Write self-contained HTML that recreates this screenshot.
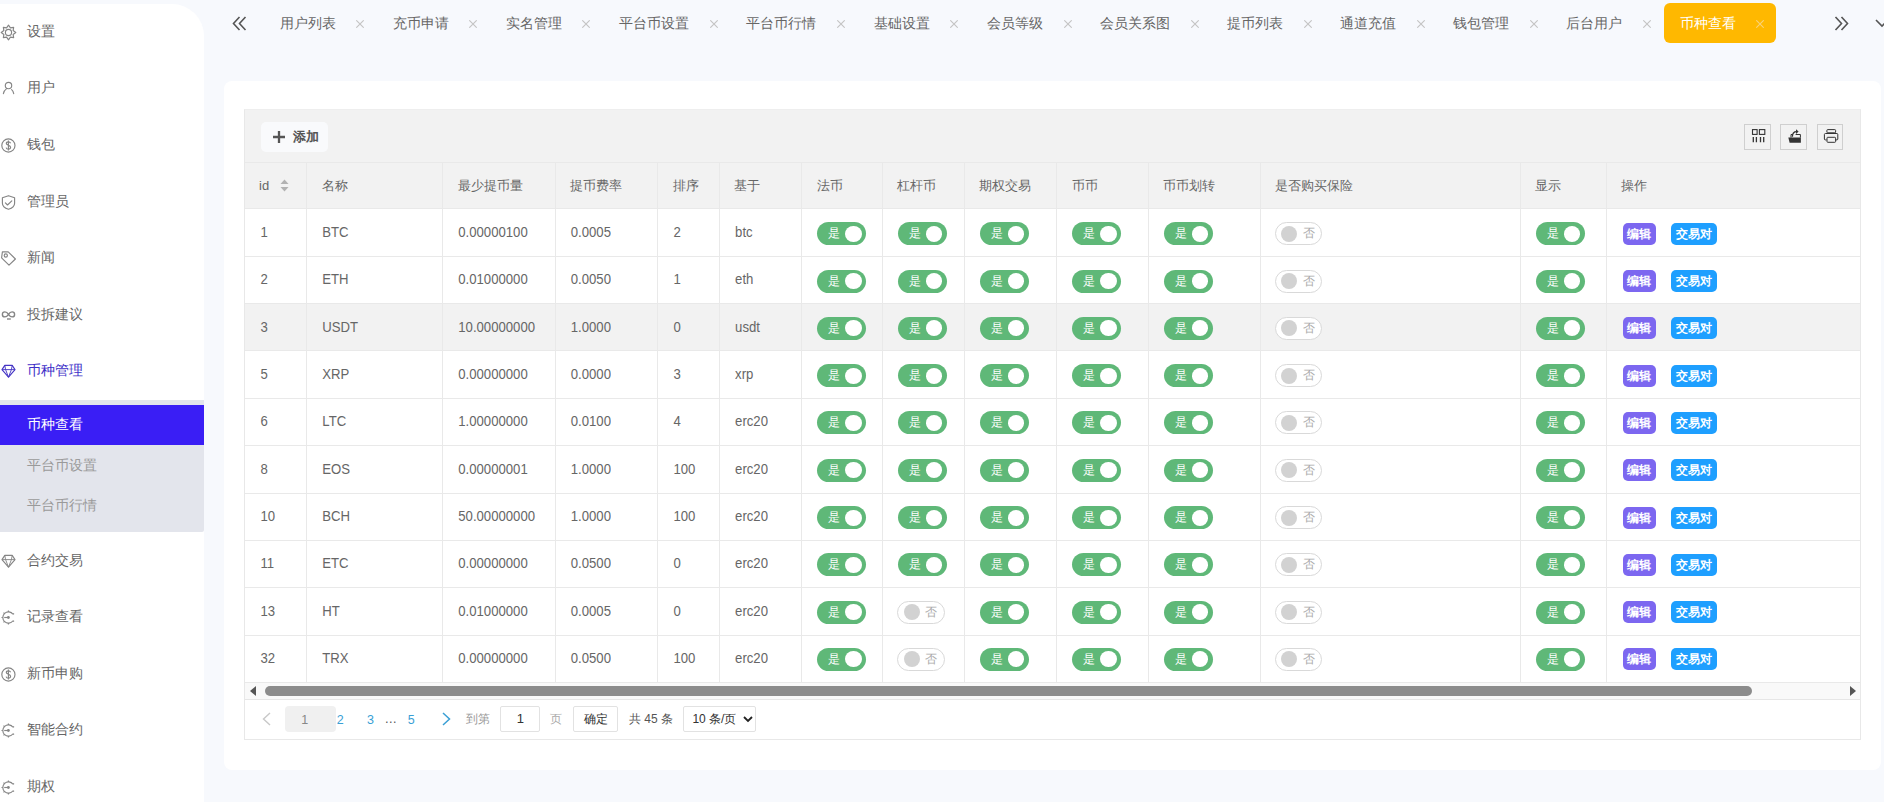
<!DOCTYPE html><html><head><meta charset="utf-8"><style>
*{box-sizing:border-box;margin:0;padding:0}
html,body{width:1884px;height:802px;overflow:hidden;background:#f7f9fd;font-family:"Liberation Sans",sans-serif;color:#666}
.abs{position:absolute}
.side{position:absolute;left:0;top:4px;width:204px;height:798px;background:#fff;border-top-right-radius:32px}
.mi{position:absolute;left:0;height:20px;line-height:20px;font-size:14.3px;color:#666;white-space:nowrap}
.mi svg{position:absolute;left:1px;top:3px}
.mi span{position:absolute;left:26.6px;top:0}
.sub{position:absolute;left:0;top:400px;width:204px;height:131.5px;background:#e3e5ec;border-bottom-right-radius:2px}
.subact{position:absolute;left:0;top:405px;width:204px;height:40px;background:#3a1ef5}
.st{position:absolute;left:27px;font-size:14px;line-height:20px;color:#9a9a9a;white-space:nowrap}
.tab{position:absolute;height:20px;line-height:20px;font-size:14.2px;color:#666;white-space:nowrap}
.tab .x{position:absolute;top:0;font-size:13px;color:#bbb}
.tab.on{background:#ffb800;border-radius:6px;color:#fff}
.tab.on .x{color:#ffd77a}
.card{position:absolute;left:224px;top:81px;width:1657px;height:689px;background:#fff;border-radius:8px}
.tbl{position:absolute;left:244px;top:109px;width:1617px;height:631px;border:1px solid #e8e8e8;border-top-color:#eeeeee;background:#fff}
.tool{position:absolute;left:0;top:0;width:1615px;height:53px;background:#f2f2f2;border-bottom:1px solid #e6e6e6}
.addb{position:absolute;left:16px;top:12px;width:67px;height:29.5px;background:#f9fafc;border-radius:5px;font-size:13px;color:#555;font-weight:bold}
.ib{position:absolute;top:14px;width:27px;height:26px;border:1px solid #cfcfcf;background:#f2f2f2}
.hdr{position:absolute;left:0;top:53px;width:1615px;height:46px;background:#f2f2f2}
.row{position:absolute;left:0;width:1615px;background:#fff}
.row.hov{background:#f2f2f2}
.hl{position:absolute;left:0;width:1615px;height:1px;background:#e9e9e9}
.vl{position:absolute;width:1px;background:#e9e9e9}
.c{position:absolute;font-size:13.15px;color:#666;white-space:nowrap;line-height:20px;transform:scaleY(1.09);transform-origin:0 55%}
.h{position:absolute;font-size:13px;color:#666;white-space:nowrap;line-height:20px}
.sw{position:absolute;height:23px;border-radius:12px}
.sw.on{width:49px;background:#5fb878}
.sw.on i{position:absolute;left:28px;top:3.5px;width:16.5px;height:16px;border-radius:50%;background:#fff}
.sw.on em{position:absolute;left:11px;top:0;font-style:normal;font-size:12px;line-height:23px;color:#fff}
.sw.off{width:47.5px;background:#fff;border:1px solid #d9d9d9}
.sw.off i{position:absolute;left:5.5px;top:2.5px;width:16px;height:16px;border-radius:50%;background:#d2d2d2}
.sw.off em{position:absolute;left:27px;top:0;font-style:normal;font-size:12px;line-height:21px;color:#aaa}
.btn{position:absolute;height:22px;line-height:22px;border-radius:5px;color:#fff;font-size:12px;font-weight:bold;text-align:center}
.pg{position:absolute;font-size:12.5px;line-height:20px;white-space:nowrap}
.pbox{position:absolute;top:596.4px;height:25.8px;border:1px solid #e2e2e2;border-radius:2px;background:#fff;font-size:13px;line-height:24px;text-align:center;color:#333}
</style></head><body>
<div class="side"></div>
<div class="sub"></div><div class="subact"></div>
<svg class="abs" style="left:0;top:23.8px" width="17" height="17" viewBox="0 0 17 17" fill="none" stroke="#858585" stroke-width="1.15"><path d="M8.50 1.20 L10.41 3.88 L13.66 3.34 L13.12 6.59 L15.80 8.50 L13.12 10.41 L13.66 13.66 L10.41 13.12 L8.50 15.80 L6.59 13.12 L3.34 13.66 L3.88 10.41 L1.20 8.50 L3.88 6.59 L3.34 3.34 L6.59 3.88Z" stroke-linejoin="round"/><circle cx="8.5" cy="8.5" r="3.1"/></svg>
<div class="mi" style="top:20.85px;color:#666"><span>设置</span></div>
<svg class="abs" style="left:0;top:80.4px" width="17" height="17" viewBox="0 0 17 17" fill="none" stroke="#858585" stroke-width="1.15"><circle cx="8.5" cy="5.5" r="3.2"/><path d="M3.4 13.6C3.9 11.2 5 9.7 6.6 8.6M11.6 9.6C12.8 10.6 13.4 11.9 13.7 13.6" stroke-linecap="round"/></svg>
<div class="mi" style="top:77.45px;color:#666"><span>用户</span></div>
<svg class="abs" style="left:0;top:137.0px" width="17" height="17" viewBox="0 0 17 17" fill="none" stroke="#858585" stroke-width="1.15"><circle cx="8.4" cy="8.5" r="6.6"/><path d="M10.6 6.2C10.2 5.2 9.4 4.8 8.4 4.8 7.2 4.8 6.3 5.5 6.3 6.5 6.3 8.6 10.6 7.9 10.6 10.3 10.6 11.4 9.7 12.2 8.4 12.2 7.2 12.2 6.4 11.6 6.1 10.6M8.4 3.6V13.4"/></svg>
<div class="mi" style="top:134.05px;color:#666"><span>钱包</span></div>
<svg class="abs" style="left:0;top:193.6px" width="17" height="17" viewBox="0 0 17 17" fill="none" stroke="#858585" stroke-width="1.15"><path d="M8.5 1.7L14.6 3.8V9.2C14.6 12.3 12.2 14.2 8.5 15.3 4.8 14.2 2.4 12.3 2.4 9.2V3.8Z" stroke-linejoin="round"/><path d="M5.4 8.8L7.5 11 11.8 6.8" stroke-linecap="round" stroke-linejoin="round"/></svg>
<div class="mi" style="top:190.65px;color:#666"><span>管理员</span></div>
<svg class="abs" style="left:0;top:250.1px" width="17" height="17" viewBox="0 0 17 17" fill="none" stroke="#858585" stroke-width="1.15"><path d="M2.4 1.8H8.2L15.4 9 9 15.2 1.6 7.8Z" stroke-linejoin="round"/><circle cx="5.8" cy="5.5" r="1.6"/></svg>
<div class="mi" style="top:247.25px;color:#666"><span>新闻</span></div>
<svg class="abs" style="left:0;top:307.4px" width="17" height="17" viewBox="0 0 17 17" fill="none" stroke="#858585" stroke-width="1.15"><path d="M8.5 7.4C7.3 5.5 6.3 4.9 4.9 4.9 3.4 4.9 2.4 6 2.4 7.4 2.4 8.8 3.4 9.9 4.9 9.9 6.3 9.9 7.3 9.3 8.5 7.4 9.7 5.5 10.7 4.9 12.1 4.9 13.6 4.9 14.6 6 14.6 7.4 14.6 8.8 13.6 9.9 12.1 9.9 10.7 9.9 9.7 9.3 8.5 7.4Z" stroke-width="1.4"/><path d="M7 12H10.8" stroke-width="1.4"/></svg>
<div class="mi" style="top:303.85px;color:#666"><span>投拆建议</span></div>
<svg class="abs" style="left:0;top:363.4px" width="17" height="17" viewBox="0 0 17 17" fill="none" stroke="#4434c4" stroke-width="1.15"><path d="M4.8 2.4H12.2L15 6.6 8.5 14.2 2 6.6Z" stroke-linejoin="round"/><path d="M2 6.6H15M5.6 6.6L8.5 14.2 11.4 6.6M4.8 2.4L5.6 6.6M12.2 2.4L11.4 6.6" stroke-width="0.9"/></svg>
<div class="mi" style="top:360.45px;color:#3d2fc8"><span>币种管理</span></div>
<svg class="abs" style="left:0;top:552.5px" width="17" height="17" viewBox="0 0 17 17" fill="none" stroke="#858585" stroke-width="1.15"><path d="M4.8 2.4H12.2L15 6.6 8.5 14.2 2 6.6Z" stroke-linejoin="round"/><path d="M2 6.6H15M5.6 6.6L8.5 14.2 11.4 6.6M4.8 2.4L5.6 6.6M12.2 2.4L11.4 6.6" stroke-width="0.9"/></svg>
<div class="mi" style="top:549.60px;color:#666"><span>合约交易</span></div>
<svg class="abs" style="left:0;top:609.0px" width="17" height="17" viewBox="0 0 17 17" fill="none" stroke="#858585" stroke-width="1.15"><path d="M12.99 5.29A5.60 5.60 0 1 0 12.99 11.71"/><path d="M8.40 2.90L8.40 1.60M4.44 4.54L3.55 3.65M2.80 8.50L1.50 8.50M4.44 12.46L3.55 13.35M8.40 14.10L8.40 15.40M12.99 5.29L14.05 4.54M12.99 11.71L14.05 12.46"/><path d="M4.2 8.5H8.4"/><circle cx="8.4" cy="8.5" r="1.4" fill="#858585" stroke="none"/></svg>
<div class="mi" style="top:606.15px;color:#666"><span>记录查看</span></div>
<svg class="abs" style="left:0;top:665.6px" width="17" height="17" viewBox="0 0 17 17" fill="none" stroke="#858585" stroke-width="1.15"><circle cx="8.4" cy="8.5" r="6.6"/><path d="M10.6 6.2C10.2 5.2 9.4 4.8 8.4 4.8 7.2 4.8 6.3 5.5 6.3 6.5 6.3 8.6 10.6 7.9 10.6 10.3 10.6 11.4 9.7 12.2 8.4 12.2 7.2 12.2 6.4 11.6 6.1 10.6M8.4 3.6V13.4"/></svg>
<div class="mi" style="top:662.70px;color:#666"><span>新币申购</span></div>
<svg class="abs" style="left:0;top:722.1px" width="17" height="17" viewBox="0 0 17 17" fill="none" stroke="#858585" stroke-width="1.15"><path d="M12.99 5.29A5.60 5.60 0 1 0 12.99 11.71"/><path d="M8.40 2.90L8.40 1.60M4.44 4.54L3.55 3.65M2.80 8.50L1.50 8.50M4.44 12.46L3.55 13.35M8.40 14.10L8.40 15.40M12.99 5.29L14.05 4.54M12.99 11.71L14.05 12.46"/><path d="M4.2 8.5H8.4"/><circle cx="8.4" cy="8.5" r="1.4" fill="#858585" stroke="none"/></svg>
<div class="mi" style="top:719.25px;color:#666"><span>智能合约</span></div>
<svg class="abs" style="left:0;top:778.7px" width="17" height="17" viewBox="0 0 17 17" fill="none" stroke="#858585" stroke-width="1.15"><path d="M12.99 5.29A5.60 5.60 0 1 0 12.99 11.71"/><path d="M8.40 2.90L8.40 1.60M4.44 4.54L3.55 3.65M2.80 8.50L1.50 8.50M4.44 12.46L3.55 13.35M8.40 14.10L8.40 15.40M12.99 5.29L14.05 4.54M12.99 11.71L14.05 12.46"/><path d="M4.2 8.5H8.4"/><circle cx="8.4" cy="8.5" r="1.4" fill="#858585" stroke="none"/></svg>
<div class="mi" style="top:775.80px;color:#666"><span>期权</span></div>
<div class="st" style="top:414px;color:#fff">币种查看</div>
<div class="st" style="top:455px">平台币设置</div>
<div class="st" style="top:495px">平台币行情</div>
<svg class="abs" style="left:232px;top:16px" width="15" height="15" viewBox="0 0 15 15" fill="none" stroke="#555" stroke-width="1.6"><path d="M7.5 1L1.5 7.5 7.5 14M13.5 1L7.5 7.5 13.5 14"/></svg>
<div class="abs" style="left:1664px;top:3px;width:112px;height:40.3px;background:#ffb800;border-radius:6px"></div>
<div class="tab" style="left:279.9px;top:13.0px;color:#666">用户列表</div>
<svg class="abs" style="left:356.4px;top:20px" width="8" height="8" viewBox="0 0 8 8" stroke="#c4c4c4" stroke-width="1.1"><path d="M0.3 0.3L7.7 7.7M7.7 0.3L0.3 7.7"/></svg>
<div class="tab" style="left:392.5px;top:13.0px;color:#666">充币申请</div>
<svg class="abs" style="left:469.0px;top:20px" width="8" height="8" viewBox="0 0 8 8" stroke="#c4c4c4" stroke-width="1.1"><path d="M0.3 0.3L7.7 7.7M7.7 0.3L0.3 7.7"/></svg>
<div class="tab" style="left:505.8px;top:13.0px;color:#666">实名管理</div>
<svg class="abs" style="left:582.3px;top:20px" width="8" height="8" viewBox="0 0 8 8" stroke="#c4c4c4" stroke-width="1.1"><path d="M0.3 0.3L7.7 7.7M7.7 0.3L0.3 7.7"/></svg>
<div class="tab" style="left:618.8px;top:13.0px;color:#666">平台币设置</div>
<svg class="abs" style="left:709.6px;top:20px" width="8" height="8" viewBox="0 0 8 8" stroke="#c4c4c4" stroke-width="1.1"><path d="M0.3 0.3L7.7 7.7M7.7 0.3L0.3 7.7"/></svg>
<div class="tab" style="left:746.3px;top:13.0px;color:#666">平台币行情</div>
<svg class="abs" style="left:837.1px;top:20px" width="8" height="8" viewBox="0 0 8 8" stroke="#c4c4c4" stroke-width="1.1"><path d="M0.3 0.3L7.7 7.7M7.7 0.3L0.3 7.7"/></svg>
<div class="tab" style="left:873.7px;top:13.0px;color:#666">基础设置</div>
<svg class="abs" style="left:950.2px;top:20px" width="8" height="8" viewBox="0 0 8 8" stroke="#c4c4c4" stroke-width="1.1"><path d="M0.3 0.3L7.7 7.7M7.7 0.3L0.3 7.7"/></svg>
<div class="tab" style="left:987.1px;top:13.0px;color:#666">会员等级</div>
<svg class="abs" style="left:1063.6px;top:20px" width="8" height="8" viewBox="0 0 8 8" stroke="#c4c4c4" stroke-width="1.1"><path d="M0.3 0.3L7.7 7.7M7.7 0.3L0.3 7.7"/></svg>
<div class="tab" style="left:1100.0px;top:13.0px;color:#666">会员关系图</div>
<svg class="abs" style="left:1190.8px;top:20px" width="8" height="8" viewBox="0 0 8 8" stroke="#c4c4c4" stroke-width="1.1"><path d="M0.3 0.3L7.7 7.7M7.7 0.3L0.3 7.7"/></svg>
<div class="tab" style="left:1227.1px;top:13.0px;color:#666">提币列表</div>
<svg class="abs" style="left:1303.6px;top:20px" width="8" height="8" viewBox="0 0 8 8" stroke="#c4c4c4" stroke-width="1.1"><path d="M0.3 0.3L7.7 7.7M7.7 0.3L0.3 7.7"/></svg>
<div class="tab" style="left:1340.2px;top:13.0px;color:#666">通道充值</div>
<svg class="abs" style="left:1416.7px;top:20px" width="8" height="8" viewBox="0 0 8 8" stroke="#c4c4c4" stroke-width="1.1"><path d="M0.3 0.3L7.7 7.7M7.7 0.3L0.3 7.7"/></svg>
<div class="tab" style="left:1453.1px;top:13.0px;color:#666">钱包管理</div>
<svg class="abs" style="left:1529.6px;top:20px" width="8" height="8" viewBox="0 0 8 8" stroke="#c4c4c4" stroke-width="1.1"><path d="M0.3 0.3L7.7 7.7M7.7 0.3L0.3 7.7"/></svg>
<div class="tab" style="left:1566.1px;top:13.0px;color:#666">后台用户</div>
<svg class="abs" style="left:1642.6px;top:20px" width="8" height="8" viewBox="0 0 8 8" stroke="#c4c4c4" stroke-width="1.1"><path d="M0.3 0.3L7.7 7.7M7.7 0.3L0.3 7.7"/></svg>
<div class="tab" style="left:1679.7px;top:13.0px;color:#fff">币种查看</div>
<svg class="abs" style="left:1756.2px;top:20px" width="8" height="8" viewBox="0 0 8 8" stroke="#f9d27a" stroke-width="1.1"><path d="M0.3 0.3L7.7 7.7M7.7 0.3L0.3 7.7"/></svg>
<svg class="abs" style="left:1834.3px;top:15.6px" width="15" height="15" viewBox="0 0 15 15" fill="none" stroke="#555" stroke-width="1.6"><path d="M1.5 1L7.5 7.5 1.5 14M7.5 1L13.5 7.5 7.5 14"/></svg>
<svg class="abs" style="left:1875px;top:18px" width="14" height="10" viewBox="0 0 14 10" fill="none" stroke="#555" stroke-width="1.6"><path d="M1 2l6 6 6-6"/></svg>
<div class="card"></div>
<div class="tbl">
<div class="tool"></div>
<div class="addb"><svg class="abs" style="left:12px;top:9px" width="12" height="12" viewBox="0 0 12 12"><path d="M6 0v12M0 6h12" stroke="#555" stroke-width="2.3"/></svg><span class="abs" style="left:32px;top:5px;line-height:20px">添加</span></div>
<div class="ib" style="left:1499.0px"></div>
<div class="ib" style="left:1535.0px"></div>
<div class="ib" style="left:1572.0px;width:26px"></div>
<svg class="abs" style="left:1500px;top:15px" width="120" height="30" viewBox="1745 125 120 30" fill="none" stroke="#333"><rect x="1752.5" y="129.6" width="4.6" height="4.8" stroke-width="1.1"/><rect x="1759.4" y="129.6" width="5.4" height="4.8" stroke-width="1.1"/><path d="M1753.3 137V142.2M1756.4 137V142.2M1760.5 137V142.2M1763.7 137V142.2" stroke-width="1.3"/><path d="M1788.3 137.6H1800.9V142.7H1789.6Z" fill="#333" stroke="none"/><path d="M1791 137.6V134.5H1792.6M1795.6 134.5H1800.4V137.6" stroke-width="1"/><path d="M1792.4 136.8C1792.4 133.6 1794.2 131.6 1796.6 131.6" stroke-width="1.3"/><path d="M1796 129.3L1798.6 131.6 1796 133.9Z" fill="#333" stroke="none"/><rect x="1826.9" y="129.6" width="8.7" height="3.2" rx="0.8" stroke-width="1"/><path d="M1826.6 139.9H1825.2C1824.6 139.9 1824.4 139.5 1824.4 139V134.5C1824.4 133.9 1824.8 133.5 1825.4 133.5H1836.9C1837.5 133.5 1837.8 133.9 1837.8 134.5V139C1837.8 139.5 1837.5 139.9 1837 139.9H1835.8" stroke-width="1"/><rect x="1827" y="137.3" width="8.6" height="5" rx="0.8" stroke-width="1"/></svg>
<div class="hdr" style="top:52.50px;height:46.10px"></div>
<div class="row" style="top:98.60px;height:47.40px"></div>
<div class="row" style="top:146.00px;height:47.40px"></div>
<div class="row hov" style="top:193.40px;height:47.40px"></div>
<div class="row" style="top:240.80px;height:47.40px"></div>
<div class="row" style="top:288.20px;height:47.40px"></div>
<div class="row" style="top:335.60px;height:47.40px"></div>
<div class="row" style="top:383.00px;height:47.40px"></div>
<div class="row" style="top:430.40px;height:47.40px"></div>
<div class="row" style="top:477.80px;height:47.40px"></div>
<div class="row" style="top:525.20px;height:47.40px"></div>
<div class="hl" style="top:52.00px"></div>
<div class="hl" style="top:98.10px"></div>
<div class="hl" style="top:145.50px"></div>
<div class="hl" style="top:192.90px"></div>
<div class="hl" style="top:240.30px"></div>
<div class="hl" style="top:287.70px"></div>
<div class="hl" style="top:335.10px"></div>
<div class="hl" style="top:382.50px"></div>
<div class="hl" style="top:429.90px"></div>
<div class="hl" style="top:477.30px"></div>
<div class="hl" style="top:524.70px"></div>
<div class="hl" style="top:572.10px"></div>
<div class="vl" style="left:61.00px;top:52.50px;height:520.10px"></div>
<div class="vl" style="left:197.00px;top:52.50px;height:520.10px"></div>
<div class="vl" style="left:309.50px;top:52.50px;height:520.10px"></div>
<div class="vl" style="left:412.20px;top:52.50px;height:520.10px"></div>
<div class="vl" style="left:473.80px;top:52.50px;height:520.10px"></div>
<div class="vl" style="left:556.10px;top:52.50px;height:520.10px"></div>
<div class="vl" style="left:636.80px;top:52.50px;height:520.10px"></div>
<div class="vl" style="left:718.80px;top:52.50px;height:520.10px"></div>
<div class="vl" style="left:811.00px;top:52.50px;height:520.10px"></div>
<div class="vl" style="left:902.80px;top:52.50px;height:520.10px"></div>
<div class="vl" style="left:1014.50px;top:52.50px;height:520.10px"></div>
<div class="vl" style="left:1274.80px;top:52.50px;height:520.10px"></div>
<div class="vl" style="left:1360.70px;top:52.50px;height:520.10px"></div>
<div class="h" style="left:14.00px;top:66.20px">id</div>
<div class="h" style="left:76.50px;top:66.20px">名称</div>
<div class="h" style="left:212.50px;top:66.20px">最少提币量</div>
<div class="h" style="left:325.00px;top:66.20px">提币费率</div>
<div class="h" style="left:427.70px;top:66.20px">排序</div>
<div class="h" style="left:489.30px;top:66.20px">基于</div>
<div class="h" style="left:571.60px;top:66.20px">法币</div>
<div class="h" style="left:652.30px;top:66.20px">杠杆币</div>
<div class="h" style="left:734.30px;top:66.20px">期权交易</div>
<div class="h" style="left:826.50px;top:66.20px">币币</div>
<div class="h" style="left:918.30px;top:66.20px">币币划转</div>
<div class="h" style="left:1030.00px;top:66.20px">是否购买保险</div>
<div class="h" style="left:1290.30px;top:66.20px">显示</div>
<div class="h" style="left:1376.20px;top:66.20px">操作</div>
<svg class="abs" style="left:35.0px;top:69.0px" width="9" height="13" viewBox="0 0 9 13"><path d="M4.5 0.5L8.5 5H0.5z" fill="#b2b2b2"/><path d="M4.5 12.5L8.5 8H0.5z" fill="#b2b2b2"/></svg>
<div class="c" style="left:15.40px;top:113.10px">1</div>
<div class="c" style="left:77.30px;top:113.10px">BTC</div>
<div class="c" style="left:213.30px;top:113.10px">0.00000100</div>
<div class="c" style="left:325.80px;top:113.10px">0.0005</div>
<div class="c" style="left:428.50px;top:113.10px">2</div>
<div class="c" style="left:490.10px;top:113.10px">btc</div>
<div class="sw on" style="left:572.10px;top:112.20px"><em>是</em><i></i></div>
<div class="sw on" style="left:652.80px;top:112.20px"><em>是</em><i></i></div>
<div class="sw on" style="left:734.80px;top:112.20px"><em>是</em><i></i></div>
<div class="sw on" style="left:827.00px;top:112.20px"><em>是</em><i></i></div>
<div class="sw on" style="left:918.80px;top:112.20px"><em>是</em><i></i></div>
<div class="sw off" style="left:1029.90px;top:112.20px"><i></i><em>否</em></div>
<div class="sw on" style="left:1290.80px;top:112.20px"><em>是</em><i></i></div>
<div class="btn" style="left:1377.70px;top:112.70px;width:33px;background:#7c67f0">编辑</div>
<div class="btn" style="left:1425.70px;top:112.70px;width:46px;background:#1e9fff">交易对</div>
<div class="c" style="left:15.40px;top:160.40px">2</div>
<div class="c" style="left:77.30px;top:160.40px">ETH</div>
<div class="c" style="left:213.30px;top:160.40px">0.01000000</div>
<div class="c" style="left:325.80px;top:160.40px">0.0050</div>
<div class="c" style="left:428.50px;top:160.40px">1</div>
<div class="c" style="left:490.10px;top:160.40px">eth</div>
<div class="sw on" style="left:572.10px;top:159.50px"><em>是</em><i></i></div>
<div class="sw on" style="left:652.80px;top:159.50px"><em>是</em><i></i></div>
<div class="sw on" style="left:734.80px;top:159.50px"><em>是</em><i></i></div>
<div class="sw on" style="left:827.00px;top:159.50px"><em>是</em><i></i></div>
<div class="sw on" style="left:918.80px;top:159.50px"><em>是</em><i></i></div>
<div class="sw off" style="left:1029.90px;top:159.50px"><i></i><em>否</em></div>
<div class="sw on" style="left:1290.80px;top:159.50px"><em>是</em><i></i></div>
<div class="btn" style="left:1377.70px;top:160.00px;width:33px;background:#7c67f0">编辑</div>
<div class="btn" style="left:1425.70px;top:160.00px;width:46px;background:#1e9fff">交易对</div>
<div class="c" style="left:15.40px;top:207.70px">3</div>
<div class="c" style="left:77.30px;top:207.70px">USDT</div>
<div class="c" style="left:213.30px;top:207.70px">10.00000000</div>
<div class="c" style="left:325.80px;top:207.70px">1.0000</div>
<div class="c" style="left:428.50px;top:207.70px">0</div>
<div class="c" style="left:490.10px;top:207.70px">usdt</div>
<div class="sw on" style="left:572.10px;top:206.80px"><em>是</em><i></i></div>
<div class="sw on" style="left:652.80px;top:206.80px"><em>是</em><i></i></div>
<div class="sw on" style="left:734.80px;top:206.80px"><em>是</em><i></i></div>
<div class="sw on" style="left:827.00px;top:206.80px"><em>是</em><i></i></div>
<div class="sw on" style="left:918.80px;top:206.80px"><em>是</em><i></i></div>
<div class="sw off" style="left:1029.90px;top:206.80px"><i></i><em>否</em></div>
<div class="sw on" style="left:1290.80px;top:206.80px"><em>是</em><i></i></div>
<div class="btn" style="left:1377.70px;top:207.30px;width:33px;background:#7c67f0">编辑</div>
<div class="btn" style="left:1425.70px;top:207.30px;width:46px;background:#1e9fff">交易对</div>
<div class="c" style="left:15.40px;top:255.00px">5</div>
<div class="c" style="left:77.30px;top:255.00px">XRP</div>
<div class="c" style="left:213.30px;top:255.00px">0.00000000</div>
<div class="c" style="left:325.80px;top:255.00px">0.0000</div>
<div class="c" style="left:428.50px;top:255.00px">3</div>
<div class="c" style="left:490.10px;top:255.00px">xrp</div>
<div class="sw on" style="left:572.10px;top:254.10px"><em>是</em><i></i></div>
<div class="sw on" style="left:652.80px;top:254.10px"><em>是</em><i></i></div>
<div class="sw on" style="left:734.80px;top:254.10px"><em>是</em><i></i></div>
<div class="sw on" style="left:827.00px;top:254.10px"><em>是</em><i></i></div>
<div class="sw on" style="left:918.80px;top:254.10px"><em>是</em><i></i></div>
<div class="sw off" style="left:1029.90px;top:254.10px"><i></i><em>否</em></div>
<div class="sw on" style="left:1290.80px;top:254.10px"><em>是</em><i></i></div>
<div class="btn" style="left:1377.70px;top:254.60px;width:33px;background:#7c67f0">编辑</div>
<div class="btn" style="left:1425.70px;top:254.60px;width:46px;background:#1e9fff">交易对</div>
<div class="c" style="left:15.40px;top:302.30px">6</div>
<div class="c" style="left:77.30px;top:302.30px">LTC</div>
<div class="c" style="left:213.30px;top:302.30px">1.00000000</div>
<div class="c" style="left:325.80px;top:302.30px">0.0100</div>
<div class="c" style="left:428.50px;top:302.30px">4</div>
<div class="c" style="left:490.10px;top:302.30px">erc20</div>
<div class="sw on" style="left:572.10px;top:301.40px"><em>是</em><i></i></div>
<div class="sw on" style="left:652.80px;top:301.40px"><em>是</em><i></i></div>
<div class="sw on" style="left:734.80px;top:301.40px"><em>是</em><i></i></div>
<div class="sw on" style="left:827.00px;top:301.40px"><em>是</em><i></i></div>
<div class="sw on" style="left:918.80px;top:301.40px"><em>是</em><i></i></div>
<div class="sw off" style="left:1029.90px;top:301.40px"><i></i><em>否</em></div>
<div class="sw on" style="left:1290.80px;top:301.40px"><em>是</em><i></i></div>
<div class="btn" style="left:1377.70px;top:301.90px;width:33px;background:#7c67f0">编辑</div>
<div class="btn" style="left:1425.70px;top:301.90px;width:46px;background:#1e9fff">交易对</div>
<div class="c" style="left:15.40px;top:349.60px">8</div>
<div class="c" style="left:77.30px;top:349.60px">EOS</div>
<div class="c" style="left:213.30px;top:349.60px">0.00000001</div>
<div class="c" style="left:325.80px;top:349.60px">1.0000</div>
<div class="c" style="left:428.50px;top:349.60px">100</div>
<div class="c" style="left:490.10px;top:349.60px">erc20</div>
<div class="sw on" style="left:572.10px;top:348.70px"><em>是</em><i></i></div>
<div class="sw on" style="left:652.80px;top:348.70px"><em>是</em><i></i></div>
<div class="sw on" style="left:734.80px;top:348.70px"><em>是</em><i></i></div>
<div class="sw on" style="left:827.00px;top:348.70px"><em>是</em><i></i></div>
<div class="sw on" style="left:918.80px;top:348.70px"><em>是</em><i></i></div>
<div class="sw off" style="left:1029.90px;top:348.70px"><i></i><em>否</em></div>
<div class="sw on" style="left:1290.80px;top:348.70px"><em>是</em><i></i></div>
<div class="btn" style="left:1377.70px;top:349.20px;width:33px;background:#7c67f0">编辑</div>
<div class="btn" style="left:1425.70px;top:349.20px;width:46px;background:#1e9fff">交易对</div>
<div class="c" style="left:15.40px;top:396.90px">10</div>
<div class="c" style="left:77.30px;top:396.90px">BCH</div>
<div class="c" style="left:213.30px;top:396.90px">50.00000000</div>
<div class="c" style="left:325.80px;top:396.90px">1.0000</div>
<div class="c" style="left:428.50px;top:396.90px">100</div>
<div class="c" style="left:490.10px;top:396.90px">erc20</div>
<div class="sw on" style="left:572.10px;top:396.00px"><em>是</em><i></i></div>
<div class="sw on" style="left:652.80px;top:396.00px"><em>是</em><i></i></div>
<div class="sw on" style="left:734.80px;top:396.00px"><em>是</em><i></i></div>
<div class="sw on" style="left:827.00px;top:396.00px"><em>是</em><i></i></div>
<div class="sw on" style="left:918.80px;top:396.00px"><em>是</em><i></i></div>
<div class="sw off" style="left:1029.90px;top:396.00px"><i></i><em>否</em></div>
<div class="sw on" style="left:1290.80px;top:396.00px"><em>是</em><i></i></div>
<div class="btn" style="left:1377.70px;top:396.50px;width:33px;background:#7c67f0">编辑</div>
<div class="btn" style="left:1425.70px;top:396.50px;width:46px;background:#1e9fff">交易对</div>
<div class="c" style="left:15.40px;top:444.20px">11</div>
<div class="c" style="left:77.30px;top:444.20px">ETC</div>
<div class="c" style="left:213.30px;top:444.20px">0.00000000</div>
<div class="c" style="left:325.80px;top:444.20px">0.0500</div>
<div class="c" style="left:428.50px;top:444.20px">0</div>
<div class="c" style="left:490.10px;top:444.20px">erc20</div>
<div class="sw on" style="left:572.10px;top:443.30px"><em>是</em><i></i></div>
<div class="sw on" style="left:652.80px;top:443.30px"><em>是</em><i></i></div>
<div class="sw on" style="left:734.80px;top:443.30px"><em>是</em><i></i></div>
<div class="sw on" style="left:827.00px;top:443.30px"><em>是</em><i></i></div>
<div class="sw on" style="left:918.80px;top:443.30px"><em>是</em><i></i></div>
<div class="sw off" style="left:1029.90px;top:443.30px"><i></i><em>否</em></div>
<div class="sw on" style="left:1290.80px;top:443.30px"><em>是</em><i></i></div>
<div class="btn" style="left:1377.70px;top:443.80px;width:33px;background:#7c67f0">编辑</div>
<div class="btn" style="left:1425.70px;top:443.80px;width:46px;background:#1e9fff">交易对</div>
<div class="c" style="left:15.40px;top:491.50px">13</div>
<div class="c" style="left:77.30px;top:491.50px">HT</div>
<div class="c" style="left:213.30px;top:491.50px">0.01000000</div>
<div class="c" style="left:325.80px;top:491.50px">0.0005</div>
<div class="c" style="left:428.50px;top:491.50px">0</div>
<div class="c" style="left:490.10px;top:491.50px">erc20</div>
<div class="sw on" style="left:572.10px;top:490.60px"><em>是</em><i></i></div>
<div class="sw off" style="left:652.20px;top:490.60px"><i></i><em>否</em></div>
<div class="sw on" style="left:734.80px;top:490.60px"><em>是</em><i></i></div>
<div class="sw on" style="left:827.00px;top:490.60px"><em>是</em><i></i></div>
<div class="sw on" style="left:918.80px;top:490.60px"><em>是</em><i></i></div>
<div class="sw off" style="left:1029.90px;top:490.60px"><i></i><em>否</em></div>
<div class="sw on" style="left:1290.80px;top:490.60px"><em>是</em><i></i></div>
<div class="btn" style="left:1377.70px;top:491.10px;width:33px;background:#7c67f0">编辑</div>
<div class="btn" style="left:1425.70px;top:491.10px;width:46px;background:#1e9fff">交易对</div>
<div class="c" style="left:15.40px;top:538.80px">32</div>
<div class="c" style="left:77.30px;top:538.80px">TRX</div>
<div class="c" style="left:213.30px;top:538.80px">0.00000000</div>
<div class="c" style="left:325.80px;top:538.80px">0.0500</div>
<div class="c" style="left:428.50px;top:538.80px">100</div>
<div class="c" style="left:490.10px;top:538.80px">erc20</div>
<div class="sw on" style="left:572.10px;top:537.90px"><em>是</em><i></i></div>
<div class="sw off" style="left:652.20px;top:537.90px"><i></i><em>否</em></div>
<div class="sw on" style="left:734.80px;top:537.90px"><em>是</em><i></i></div>
<div class="sw on" style="left:827.00px;top:537.90px"><em>是</em><i></i></div>
<div class="sw on" style="left:918.80px;top:537.90px"><em>是</em><i></i></div>
<div class="sw off" style="left:1029.90px;top:537.90px"><i></i><em>否</em></div>
<div class="sw on" style="left:1290.80px;top:537.90px"><em>是</em><i></i></div>
<div class="btn" style="left:1377.70px;top:538.40px;width:33px;background:#7c67f0">编辑</div>
<div class="btn" style="left:1425.70px;top:538.40px;width:46px;background:#1e9fff">交易对</div>
<div class="abs" style="left:0;top:572.60px;width:1615px;height:17.5px;background:#f9f9f9;border-bottom:1px solid #e6e6e6"></div>
<svg class="abs" style="left:5.0px;top:576.0px" width="6" height="10" viewBox="0 0 6 10"><path d="M6 0v10L0 5z" fill="#555"/></svg>
<svg class="abs" style="left:1605.0px;top:576.0px" width="6" height="10" viewBox="0 0 6 10"><path d="M0 0v10L6 5z" fill="#555"/></svg>
<div class="abs" style="left:20.0px;top:576.0px;width:1487.0px;height:10px;border-radius:5px;background:#8c8c8c"></div>
<svg class="abs" style="left:16.8px;top:602.0px" width="9" height="14" viewBox="0 0 9 14" fill="none" stroke="#c8c8c8" stroke-width="1.4"><path d="M8 1L1.5 7 8 13"/></svg>
<div class="abs" style="left:40.2px;top:596.2px;width:50.5px;height:25.5px;background:#f0f0f0;border-radius:4px;line-height:25.5px;font-size:12.5px;color:#888"><span class="abs" style="left:16px;top:1.5px">1</span></div>
<div class="pg" style="left:91.7px;top:600.0px;color:#3a9fd5">2</div>
<div class="pg" style="left:122.0px;top:600.0px;color:#3a9fd5">3</div>
<div class="pg" style="left:162.7px;top:600.0px;color:#3a9fd5">5</div>
<div class="pg" style="left:139.5px;top:599.0px;color:#555">…</div>
<svg class="abs" style="left:196.5px;top:602.0px" width="9" height="14" viewBox="0 0 9 14" fill="none" stroke="#3a9fd5" stroke-width="1.5"><path d="M1 1L7.5 7 1 13"/></svg>
<div class="pg" style="left:221.0px;top:599.0px;color:#999;font-size:12px">到第</div>
<div class="pbox" style="left:255.3px;width:40px">1</div>
<div class="pg" style="left:304.8px;top:599.0px;color:#aaa;font-size:12px">页</div>
<div class="pbox" style="left:328.1px;width:45px;font-size:12px">确定</div>
<div class="pg" style="left:384.0px;top:599.0px;color:#555;font-size:12px">共 45 条</div>
<div class="pbox" style="left:438.4px;width:73px;text-align:left;padding-left:8px;font-size:12px">10 条/页<svg class="abs" style="left:59px;top:9px" width="10" height="7" viewBox="0 0 10 7" fill="none" stroke="#222" stroke-width="1.8"><path d="M1 1l4 4 4-4"/></svg></div>
</div>
</body></html>
